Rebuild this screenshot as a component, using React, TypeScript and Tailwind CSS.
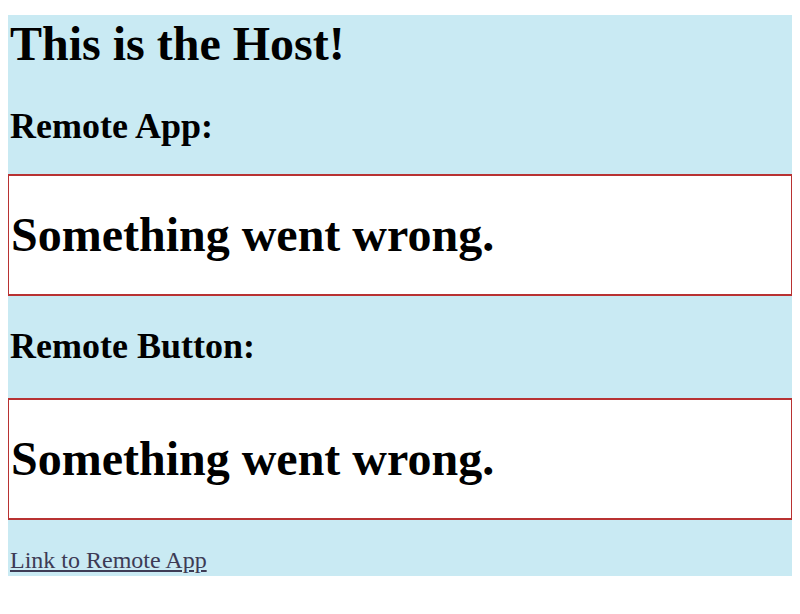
export default function App() {
  return (
    <div className="min-h-[614px] bg-white px-2 pt-[15px] font-['Liberation_Serif',serif] text-black">
      <div className="bg-[#c9eaf3] px-[2px] pt-[2px] pb-[2px]">
        <h1 className="text-[48px] leading-[53px] font-bold">This is the Host!</h1>
        <h2 className="mt-[36px] text-[36px] leading-[40px] font-bold">Remote App:</h2>
        <div className="-mx-[2px] mt-[28px] border-y-2 border-x border-[#b83232] bg-white px-[2px] py-[32px]">
          <h1 className="text-[48px] leading-[54px] font-bold">Something went wrong.</h1>
        </div>
        <h2 className="mt-[30px] text-[36px] leading-[40px] font-bold">Remote Button:</h2>
        <div className="-mx-[2px] mt-[32px] border-y-2 border-x border-[#b83232] bg-white px-[2px] py-[32px]">
          <h1 className="text-[48px] leading-[54px] font-bold">Something went wrong.</h1>
        </div>
        <a href="#" className="mt-[27px] block text-[24px] leading-[27px] text-[#3d3b55] underline">
          Link to Remote App
        </a>
      </div>
    </div>
  );
}
